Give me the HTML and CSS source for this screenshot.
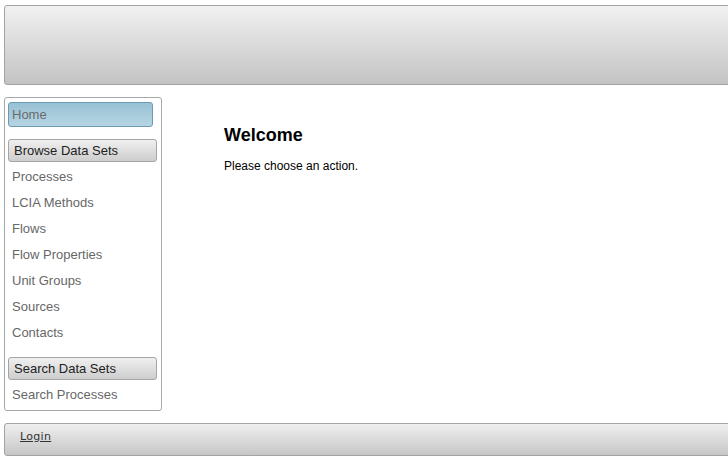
FILE: index.html
```html
<!DOCTYPE html>
<html lang="en">
<head>
<meta charset="utf-8">
<title>Welcome</title>
<link rel="stylesheet" href="styles.css">
</head>
<body>
<div class="page">
  <header class="header"></header>
  <div class="middle">
    <nav class="sidebar">
      <a class="home" href="#">Home</a>
      <div class="section">Browse Data Sets</div>
      <ul class="links">
        <li><a href="#">Processes</a></li>
        <li><a href="#">LCIA Methods</a></li>
        <li><a href="#">Flows</a></li>
        <li><a href="#">Flow Properties</a></li>
        <li><a href="#">Unit Groups</a></li>
        <li><a href="#">Sources</a></li>
        <li><a href="#">Contacts</a></li>
      </ul>
      <div class="section">Search Data Sets</div>
      <ul class="links">
        <li><a href="#">Search Processes</a></li>
      </ul>
    </nav>
    <main class="content">
      <h1 class="title">Welcome</h1>
      <p class="lead">Please choose an action.</p>
    </main>
  </div>
  <footer class="footer"><a class="login" href="#">Login</a></footer>
</div>
</body>
</html>
```

FILE: styles.css
```css
html, body {
  margin: 0;
  padding: 0;
  overflow: hidden;
  background: #fff;
}
body {
  font-family: "Liberation Sans", Arial, sans-serif;
}
.page {
  padding: 5px 0 0 4px;
  width: 760px;
}
.header {
  height: 78px;
  border: 1px solid #a3a3a3;
  border-radius: 3px;
  background: linear-gradient(to bottom, #f1f1f1, #c3c3c3);
}
.middle {
  display: flex;
  margin-top: 12px;
}
.sidebar {
  width: 150px;
  height: 305px;
  border: 1px solid #a8a8a8;
  border-radius: 3px;
  padding: 4px 3px 3px 3px;
  display: flex;
  flex-direction: column;
}
.home {
  display: block;
  width: 140px;
  height: 23px;
  line-height: 23px;
  padding-left: 3px;
  border: 1px solid #6c9ab2;
  border-radius: 3px;
  background: linear-gradient(to bottom, #98c1d4, #b6d5e3);
  color: #6b6b6b;
  font-size: 13px;
  text-decoration: none;
  margin-bottom: 12px;
}
.section {
  height: 21px;
  line-height: 21px;
  width: 142px;
  padding-left: 5px;
  border: 1px solid #a5a5a5;
  border-radius: 3px;
  background: linear-gradient(to bottom, #f0f0f0, #cdcdcd);
  color: #222;
  font-size: 13px;
}
.links {
  list-style: none;
  margin: 1px 0 12px 0;
  padding: 0;
}
.links li {
  height: 26px;
  line-height: 26px;
  padding-left: 4px;
}
.links a {
  color: #676767;
  font-size: 13px;
  text-decoration: none;
}
.content {
  padding-left: 62px;
  padding-top: 26px;
}
.title {
  margin: 0;
  font-size: 18px;
  font-weight: bold;
  color: #000;
  line-height: 24px;
}
.lead {
  margin: 12px 0 0 0;
  font-size: 12px;
  color: #000;
}
.footer {
  margin-top: 12px;
  height: 31px;
  border: 1px solid #a3a3a3;
  border-radius: 3px;
  background: linear-gradient(to bottom, #efefef, #c6c6c6);
  padding-left: 15px;
  line-height: 21px;
}
.login {
  font-family: "DejaVu Sans", Tahoma, sans-serif;
  font-size: 11px;
  letter-spacing: 0.3px;
  color: #333;
  text-decoration: underline;
}
```
